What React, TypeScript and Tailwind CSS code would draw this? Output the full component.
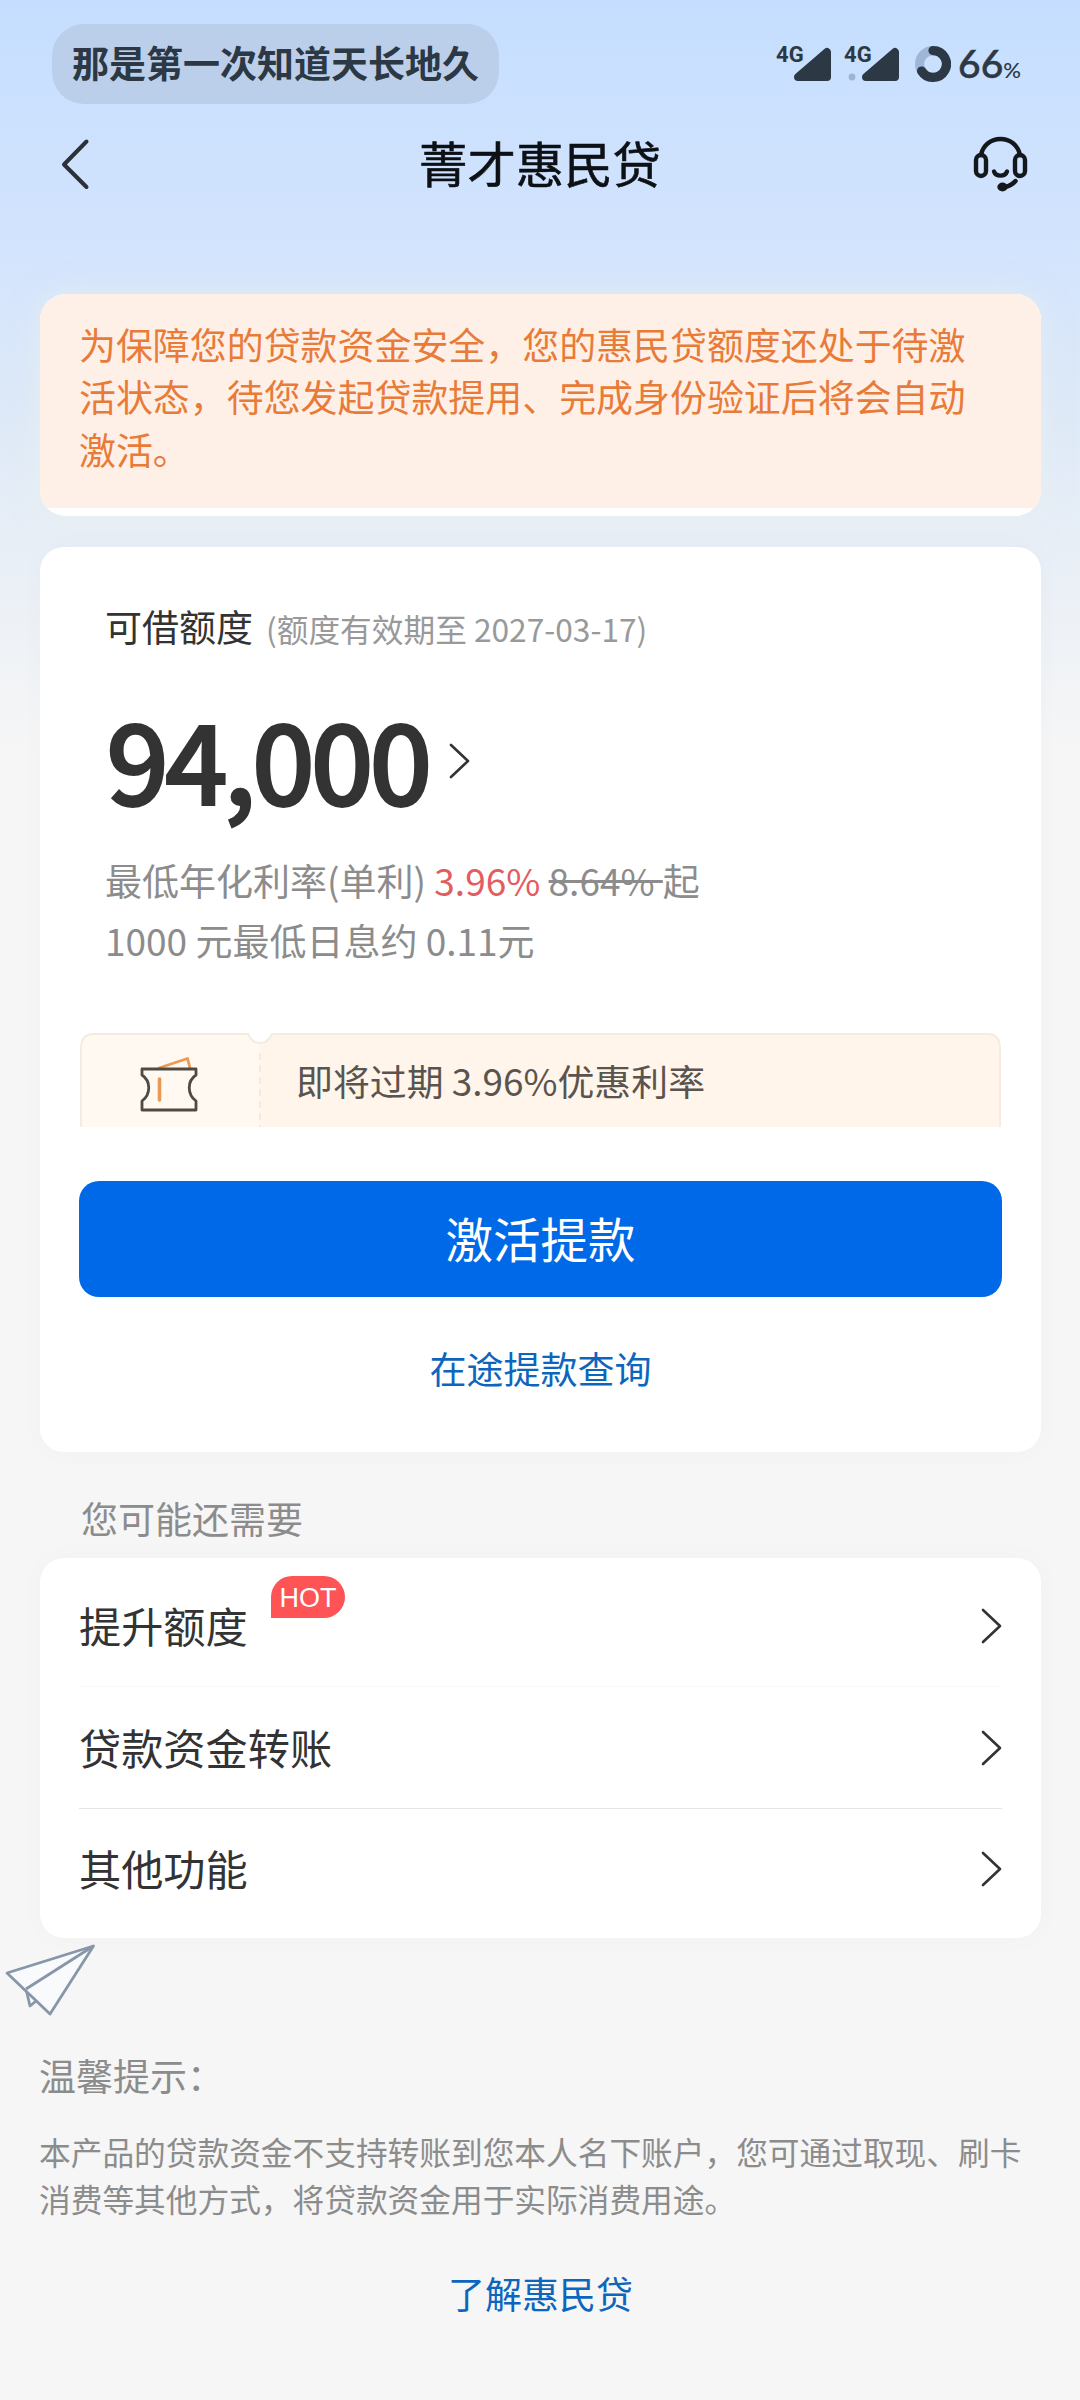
import React from "react";
import clsx from "clsx";

interface MenuItem {
    label: string;
    hot?: boolean;
}

const menuItems: MenuItem[] = [
    { label: "提升额度", hot: true },
    { label: "贷款资金转账" },
    { label: "其他功能" },
];

const Signal = ({ dot }: { dot?: boolean }) => {
    return (
        <div className="relative h-9 w-[56px]">
            <span className="absolute left-0 top-0 font-['Roboto',sans-serif] text-[22px] font-bold leading-[18px]">
                4G
            </span>
            <svg viewBox="0 0 56 36" className="h-9 w-[56px]">
                {dot && <circle cx="8" cy="31" r="3.4" fill="#9fb4d2" />}
                <path
                    d="M22 31 L51 6 V31 Z"
                    fill="currentColor"
                    stroke="currentColor"
                    strokeWidth="8"
                    strokeLinejoin="round"
                />
            </svg>
        </div>
    );
};

const BatteryRing = () => {
    return (
        <svg viewBox="0 0 36 36" className="h-9 w-9" fill="none" strokeWidth="9.2">
            <circle cx="18" cy="18" r="13.4" stroke="#9fb6d8" />
            <path
                d="M18 4.6 A13.4 13.4 0 1 1 6.6 25"
                stroke="currentColor"
                strokeLinecap="round"
            />
        </svg>
    );
};

const StatusBar = () => {
    return (
        <div className="flex items-center justify-between pl-[52px] pr-[59px] pt-6 text-[#2c3844]">
            <div className="h-20 w-[447px] rounded-[32px] bg-[#bbcfeb] pl-5 text-[37px] font-bold leading-[76px]">
                那是第一次知道天长地久
            </div>
            <div className="flex items-center">
                <Signal />
                <div className="w-3" />
                <Signal dot />
                <div className="w-[15px]" />
                <BatteryRing />
                <div className="ml-[7px] flex items-baseline pt-1 font-['Lato',sans-serif] leading-9">
                    <span className="text-[39px] font-medium [-webkit-text-stroke:0.5px_currentColor]">
                        66
                    </span>
                    <span className="text-[22px] font-medium">%</span>
                </div>
            </div>
        </div>
    );
};

const NavBar = () => {
    return (
        <div className="flex h-[120px] items-center justify-between pl-[60px] pr-[52px]">
            <svg
                viewBox="0 0 32 54"
                className="h-[54px] w-8"
                fill="none"
                stroke="#2c3138"
                strokeWidth="4"
                strokeLinecap="round"
                strokeLinejoin="round"
            >
                <path d="M26.5 4.5 L4 27.5 L26.5 50" />
            </svg>
            <h1 className="pb-[5px] pl-4 text-[48.4px] leading-[60px] text-[#0d1115] [-webkit-text-stroke:0.6px_currentColor]">
                菁才惠民贷
            </h1>
            <svg
                viewBox="0 0 56 56"
                className="h-14 w-14"
                fill="none"
                stroke="#14181d"
                strokeWidth="4.4"
                strokeLinecap="round"
            >
                <path d="M9 19 C11 9 19 3 28.5 3 C38 3 46 9 48 19" />
                <rect x="4" y="19" width="10" height="21" rx="5" />
                <rect x="43" y="19" width="10" height="21" rx="5" />
                <path d="M22 35.5 C24 41 33 41 35 35.5" />
                <path d="M43.500 45 C41 48 38 50 33 51" />
                <ellipse cx="30.5" cy="51" rx="3" ry="2.2" fill="#14181d" />
            </svg>
        </div>
    );
};

const Chevron = () => {
    return (
        <svg
            viewBox="0 0 22 38"
            className="h-[38px] w-[22px]"
            fill="none"
            stroke="#333"
            strokeWidth="2.6"
            strokeLinecap="round"
            strokeLinejoin="round"
        >
            <path d="M3 3 L20 19 L3 35" />
        </svg>
    );
};

const Coupon = () => {
    return (
        <div className="relative mx-10 mt-[63px] h-[94px]">
            <svg viewBox="0 0 921 94" className="absolute inset-0 h-[94px] w-full" fill="none">
                <path d="M1 94 V16 Q1 1 13 1 H168 Q172 10 180 10 V94 Z" fill="#fff9f1" />
                <path d="M180 94 V10 Q188 10 192 1 H908 Q920 1 920 16 V94 Z" fill="#fff5eb" />
                <path
                    d="M1 94 V16 Q1 1 13 1 H168 Q172 10 180 10 Q188 10 192 1 H908 Q920 1 920 16 V94"
                    stroke="#f4ece1"
                    strokeWidth="2"
                />
                <path d="M180 20 V94" stroke="#f6e9dd" strokeWidth="2" strokeDasharray="7 5" />
            </svg>
            <div className="relative flex h-full items-center">
                <svg
                    viewBox="0 0 60 56"
                    className="ml-[59px] mt-2 h-14 w-[60px]"
                    fill="none"
                    strokeWidth="2.8"
                    strokeLinejoin="round"
                    strokeLinecap="round"
                >
                    <path d="M20 12 L48.5 2.5 L51 12" stroke="#ea9a55" />
                    <path
                        d="M3 13 H57 V19 C48 25 48 38 57 45 V54 H3 V45 C12 38 12 25 3 19 Z"
                        stroke="#4f4a42"
                    />
                    <path d="M20.500 23 V44" stroke="#ea9a55" strokeWidth="3.6" />
                </svg>
                <span className="ml-[97px] text-[36.9px] leading-[50px] text-[#5a544e]">
                    即将过期 3.96%优惠利率
                </span>
            </div>
        </div>
    );
};

const QuotaCard = () => {
    return (
        <section className="mt-[31px] h-[905px] rounded-3xl bg-white pt-[57px] shadow-[0_0_28px_rgba(0,0,0,0.025)]">
            <div className="px-[65px]">
                <div className="flex items-center text-[37px] leading-[44px] text-[#333]">
                    可借额度
                    <span className="ml-[13px] pt-1 text-[31.7px] leading-[40px] text-[#999]">
                        (额度有效期至 2027-03-17)
                    </span>
                </div>
                <div className="mt-[49px] flex items-center">
                    <span className="pl-px text-[111px] font-medium leading-[120px] tracking-[-4.6px] text-[#333] [-webkit-text-stroke:1.8px_currentColor]">
                        94,000
                    </span>
                    <div className="ml-5 pt-[7px]">
                        <Chevron />
                    </div>
                </div>
                <div className="mt-[33px] text-[37px] leading-[60px] text-[#8c8c8c]">
                    <p className="whitespace-pre">
                        最低年化利率(单利) <span className="text-[#e25c60]">3.96%</span>{" "}
                        <span className="line-through">8.64% </span>起
                    </p>
                    <p>1000 元最低日息约 0.11元</p>
                </div>
            </div>
            <Coupon />
            <button className="mx-[39px] mt-[54px] block h-[116px] w-[923px] rounded-[20px] bg-[#0069e8] pb-[3px] text-[47.5px] text-white">
                激活提款
            </button>
            <a className="mt-[46px] block text-center text-[37px] leading-[50px] text-[#0d66bd]">
                在途提款查询
            </a>
        </section>
    );
};

const MenuRow = ({ item, last, faint }: { item: MenuItem; last: boolean; faint: boolean }) => {
    return (
        <div
            className={clsx(
                "flex items-center justify-between",
                last ? "h-[120px]" : "h-[122px] border-b",
                faint ? "border-[#f9f9f9]" : "border-[#e4e4e4]"
            )}
        >
            <div className="relative pb-0.5 text-[42.2px] leading-[60px] text-[#333]">
                {item.label}
                {item.hot && (
                    <span className="absolute -top-[19px] left-[192px] flex h-[42px] w-[74px] items-center justify-center rounded-[21px] rounded-bl-none bg-[#fe5455] pt-1 font-['Liberation_Sans',sans-serif] text-[27px] leading-none text-white">
                        HOT
                    </span>
                )}
            </div>
            <Chevron />
        </div>
    );
};

const PaperPlane = () => {
    return (
        <svg
            viewBox="0 0 100 80"
            className="h-20 w-[100px]"
            fill="#f8fafc"
            stroke="#8796a9"
            strokeWidth="2.8"
            strokeLinejoin="round"
        >
            <path d="M26 51 L30 68 L36 63" />
            <path d="M93.500 8 L7 35 L50 76 Z" />
            <path d="M93.500 8 L26 51" />
        </svg>
    );
};

const App = () => {
    return (
        <div className="h-[2400px] w-[1080px] overflow-hidden bg-[#f6f6f6] bg-[linear-gradient(180deg,#c5deff_0px,#d3e4fd_250px,#dde9f8_400px,#e9eff6_560px,#f6f6f6_750px)] font-['Noto_Sans_CJK_SC',sans-serif]">
            <StatusBar />
            <NavBar />
            <main className="pl-10 pr-[39px] pt-[70px]">
                <div className="h-[222px] overflow-hidden rounded-[26px] bg-white shadow-[0_0_28px_rgba(240,245,240,0.5)]">
                    <p className="h-[214px] whitespace-nowrap bg-[#fff0e7] pl-[39px] pt-6 text-[36.95px] leading-[52.4px] text-[#e97b39]">
                        为保障您的贷款资金安全，您的惠民贷额度还处于待激
                        <br />
                        活状态，待您发起贷款提用、完成身份验证后将会自动
                        <br />
                        激活。
                    </p>
                </div>
                <QuotaCard />
                <h2 className="ml-[41px] mt-[41px] text-[37px] leading-[50px] text-[#8c8c8c]">
                    您可能还需要
                </h2>
                <section className="mt-[15px] rounded-3xl bg-white px-[39px] pb-[9px] pt-[7px] shadow-[0_0_28px_rgba(0,0,0,0.025)]">
                    {menuItems.map((item, i) => (
                        <MenuRow
                            key={item.label}
                            item={item}
                            faint={i === 0}
                            last={i === menuItems.length - 1}
                        />
                    ))}
                </section>
            </main>
            <PaperPlane />
            <footer className="mt-8 pl-[39px] pr-[38px] text-[#8c8c8c]">
                <p className="text-[37px] leading-[50px]">温馨提示：</p>
                <p className="mt-7 whitespace-nowrap text-[31.7px] leading-[47px]">
                    本产品的贷款资金不支持转账到您本人名下账户，您可通过取现、刷卡
                    <br />
                    消费等其他方式，将贷款资金用于实际消费用途。
                </p>
                <a className="mt-[46px] block text-center text-[37px] leading-[50px] text-[#0d66bd]">
                    了解惠民贷
                </a>
            </footer>
        </div>
    );
};

export default App;
